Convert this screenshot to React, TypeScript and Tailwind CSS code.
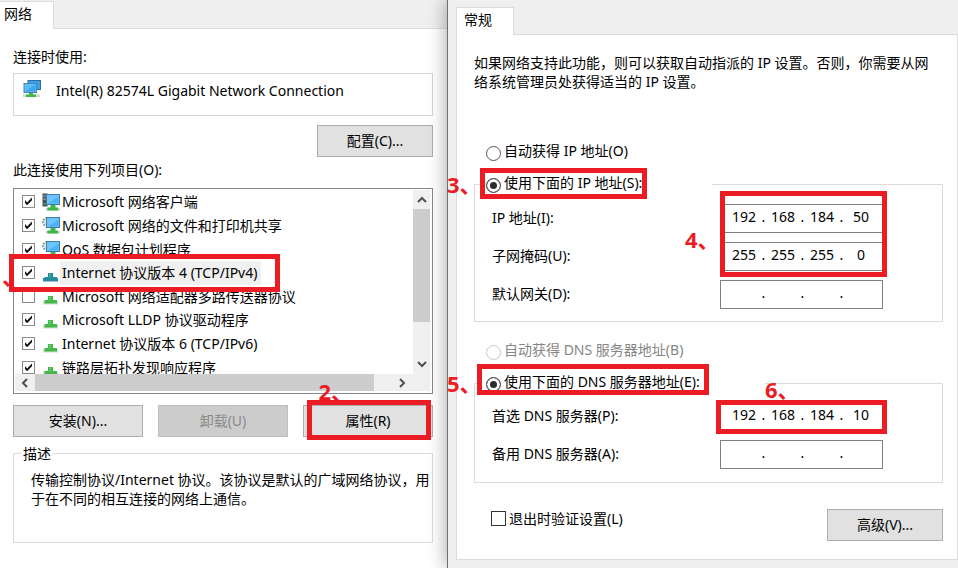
import React from "react";
import clsx from "clsx";

type IconKind = "client" | "service" | "protocol" | "selected";

interface ConnectionItem {
  id: string;
  name: string;
  icon: IconKind;
  checked: boolean;
}

const items: ConnectionItem[] = [
  { id: "client", name: "Microsoft 网络客户端", icon: "client", checked: true },
  { id: "share", name: "Microsoft 网络的文件和打印机共享", icon: "service", checked: true },
  { id: "qos", name: "QoS 数据包计划程序", icon: "service", checked: true },
  { id: "ipv4", name: "Internet 协议版本 4 (TCP/IPv4)", icon: "selected", checked: true },
  { id: "mux", name: "Microsoft 网络适配器多路传送器协议", icon: "protocol", checked: false },
  { id: "lldp", name: "Microsoft LLDP 协议驱动程序", icon: "protocol", checked: true },
  { id: "ipv6", name: "Internet 协议版本 6 (TCP/IPv6)", icon: "protocol", checked: true },
  { id: "topology", name: "链路层拓扑发现响应程序", icon: "protocol", checked: true },
];

const AdapterIcon = () => (
  <svg width="18" height="18" viewBox="0 0 18 18" aria-hidden="true">
    <rect x="5" y="0.5" width="12.5" height="9" fill="#3aa0ea" stroke="#2f6f9e" />
    <rect x="1" y="3.5" width="12.5" height="9" fill="#5cbcf8" stroke="#4d86ab" />
    <path d="M2 11.5 L12.5 4.5 V11.5Z" fill="#3fa6ee" />
    <path d="M0 14.5h17v2.5H0z" fill="#d2d5d2" />
    <path d="M6 13h4v1.5h3V17H3v-2.500h3z" fill="#3fb54a" />
  </svg>
);

const ItemIcon = ({ kind }: { kind: IconKind }) => {
  if (kind === "protocol" || kind === "selected") {
    const teal = kind === "selected";
    return (
      <svg width="18" height="18" viewBox="0 0 18 18" aria-hidden="true">
        <path d="M1 14h15v3.500H1z" fill={teal ? "#3c7fae" : "#d3dbd3"} />
        <path d="M6 9h5v4h4v3.500H2.500V13H6z" fill={teal ? "#1f8f9c" : "#45b649"} />
        <path d="M7 9.500h2v4H7z" fill={teal ? "#38a9a8" : "#66c968"} />
      </svg>
    );
  }
  return (
    <svg width="18" height="18" viewBox="0 0 18 18" aria-hidden="true">
      {kind === "client" ? (
        <g>
          <path d="M0.500 0.500h5v13h-5z" fill="#4a4f54" />
          <path d="M1 3h4M1 6h4" stroke="#a7adb2" />
          <path d="M1.500 10h2v1.500h-2z" fill="#3bc04a" />
        </g>
      ) : (
        <circle cx="5" cy="6" r="4" fill="#e8e8e8" stroke="#8f979d" strokeWidth="2" strokeDasharray="1.600 1.200" />
      )}
      <rect x="4.500" y="1.500" width="13" height="10" fill="#6cc6fb" stroke="#3b7ca8" />
      <path d="M6 10.500 L16.500 3.500 V10.500Z" fill="#4db2f4" />
      <path d="M4 15h14v2.500H4z" fill="#c9d3c9" />
      <path d="M8.500 12h5v2.500H16v3H5.500v-3h3z" fill="#3fb54a" />
    </svg>
  );
};

const CheckBox = ({ id, checked }: { id: string; checked: boolean }) => (
  <span className="relative block size-[13px]">
    <input
      id={id}
      type="checkbox"
      defaultChecked={checked}
      className="peer block size-[13px] appearance-none border border-[#8a8a8a] bg-white"
    />
    <svg
      viewBox="0 0 13 13"
      aria-hidden="true"
      className="pointer-events-none absolute inset-0 hidden size-[13px] peer-checked:block"
    >
      <path d="M3 5v3l2 2.200 5-5V2.500L5 7.500z" fill="#111" />
    </svg>
  </span>
);

interface RadioProps {
  id: string;
  name: string;
  label: string;
  checked?: boolean;
  disabled?: boolean;
}

const Radio: React.FC<RadioProps> = ({ id, name, label, checked, disabled }) => (
  <div className="flex h-5 items-center gap-[3px]">
    <input
      id={id}
      type="radio"
      name={name}
      defaultChecked={checked}
      disabled={disabled}
      className="mt-[3px] size-[15px] shrink-0 appearance-none rounded-full border border-[#555] bg-white checked:bg-[#2b2b2b] checked:shadow-[inset_0_0_0_3px_white] disabled:border-[#c8c8c8]"
    />
    <label htmlFor={id} className={clsx("pb-1 whitespace-nowrap", disabled && "text-[#858585]")}>
      {label}
    </label>
  </div>
);

// Red number with the enumeration comma, placed over the dialog
const Step = ({ children, className }: { children: string; className: string }) => (
  <span className={clsx("pointer-events-none absolute text-[22px] leading-6 font-bold whitespace-nowrap text-[#ec1c24]", className)}>
    {children}
  </span>
);

const Frame = ({ className }: { className: string }) => (
  <span className={clsx("pointer-events-none absolute border-5 border-[#ec1c24]", className)} />
);

const DialogButton = ({ children, className, disabled }: { children: string; className?: string; disabled?: boolean }) => (
  <button
    disabled={disabled}
    className={clsx(
      "h-8 border border-[#adadad] bg-[#e1e1e1] pb-0.5 disabled:border-[#bfbfbf] disabled:bg-[#cccccc] disabled:text-[#8a8a8a]",
      className
    )}
  >
    {children}
  </button>
);

const AddressRow = ({ label, octets }: { label: string; octets: string[] }) => (
  <div className="flex items-center">
    <span className="w-[228px] pb-0.5">{label}</span>
    <div role="group" aria-label={label} className="flex h-[29px] w-[163px] items-center border border-[#7f7f7f] bg-white pb-1 pl-[7px]">
      {octets.map((octet, i) => (
        <React.Fragment key={i}>
          {i > 0 && <span className="w-[7px] text-center">.</span>}
          <input aria-label={`${label} ${i + 1}`} defaultValue={octet} className="w-8 bg-transparent text-center outline-none" />
        </React.Fragment>
      ))}
    </div>
  </div>
);

const Chevron = ({ d }: { d: string }) => (
  <svg width="10" height="10" viewBox="0 0 10 10" aria-hidden="true">
    <path d={d} fill="none" stroke="#505050" strokeWidth="2" />
  </svg>
);

const ItemList = () => (
  <div className="relative border border-[#828790] bg-white p-px">
    <div className="flex h-[184px]">
      <div className="min-w-0 flex-1 overflow-hidden">
        <ul className="grid h-[189px] grid-rows-8">
          {items.map((item) => (
            <li key={item.id} className="flex items-center pl-[7px]">
              <CheckBox id={item.id} checked={item.checked} />
              <label htmlFor={item.id} className="flex h-full items-center pl-[7px] whitespace-nowrap">
                <ItemIcon kind={item.icon} />
                <span className={clsx("flex h-full items-center pr-1 pl-0.5", item.icon === "selected" && "bg-[#f0f0f0]")}>
                  {item.name}
                </span>
              </label>
            </li>
          ))}
        </ul>
      </div>
      <div className="mr-px flex w-[17px] flex-col items-center bg-[#f0f0f0]">
        <button aria-label="向上滚动" className="grid h-[19px] place-items-center">
          <Chevron d="M1 7l4-4 4 4" />
        </button>
        <div className="h-[113px] w-full bg-[#cdcdcd]" />
        <button aria-label="向下滚动" className="mt-auto grid h-5 place-items-center">
          <Chevron d="M1 3l4 4 4-4" />
        </button>
      </div>
    </div>
    <div className="mr-px mb-px flex h-[17px] items-center bg-[#f0f0f0]">
      <button aria-label="向左滚动" className="grid w-5 place-items-center">
        <Chevron d="M7 1L3 5l4 4" />
      </button>
      <div className="h-full w-[82%] bg-[#cdcdcd]" />
      <button aria-label="向右滚动" className="ml-auto grid w-14 place-items-center">
        <Chevron d="M3 1l4 4-4 4" />
      </button>
    </div>
    <Step className="top-[75px] -left-3">、</Step>
    <Frame className="top-[65px] -left-[5px] h-[38px] w-[271px]" />
  </div>
);

const NetworkDialog = () => (
  <section className="flex flex-col bg-[#efefef]">
    <div className="flex h-[29px] items-end border-b border-[#dcdcdc]">
      <h2 className="-mb-px h-7 w-[54px] border-t border-r border-[#dcdcdc] bg-white pt-0.5 pl-1">网络</h2>
    </div>
    <div className="flex-1 bg-white pr-[14px] pb-6 pl-[13px]">
      <p className="pt-[18px]">连接时使用:</p>
      <div className="mt-[7px] flex h-[43px] border border-[#d5d5d5] pt-1.5 pl-[9px]">
        <AdapterIcon />
        <span className="pt-px pl-[15px]">Intel(R) 82574L Gigabit Network Connection</span>
      </div>
      <div className="mt-[9px] flex justify-end">
        <DialogButton className="w-[116px]">配置(C)...</DialogButton>
      </div>
      <p className="mt-[3px] mb-[9px]">此连接使用下列项目(O):</p>
      <ItemList />
      <div className="relative mt-[11px] flex justify-between">
        <DialogButton className="w-[130px]">安装(N)...</DialogButton>
        <DialogButton className="w-[130px]" disabled>卸载(U)</DialogButton>
        <DialogButton className="w-[130px]">属性(R)</DialogButton>
        <Step className="-top-[26px] right-[80px]">2、</Step>
        <Frame className="-top-[5px] right-0.5 h-10 w-[124px]" />
      </div>
      <fieldset className="mt-[7px] min-h-[99px] border border-[#dcdcdc] pl-[17px]">
        <legend className="-ml-2.5 px-0.5">描述</legend>
        <p className="pt-[7px] whitespace-nowrap">
          传输控制协议/Internet 协议。该协议是默认的广域网络协议，用
          <br />
          于在不同的相互连接的网络上通信。
        </p>
      </fieldset>
    </div>
  </section>
);

const Ipv4Dialog = () => (
  <section className="relative border-l border-[#6e6e6e] bg-[#efefef] pt-[7px] pl-2 shadow-[-2px_0_16px_rgba(0,0,0,0.3)]">
    <h2 className="relative -mb-px h-7 w-[58px] border border-b-0 border-[#dcdcdc] bg-white pt-0.5 pl-[7px]">常规</h2>
    <div className="border border-[#dcdcdc] bg-white pr-[14px] pb-[18px] pl-[17px]">
      <p className="pt-[18px] whitespace-nowrap">
        如果网络支持此功能，则可以获取自动指派的 IP 设置。否则，你需要从网
        <br />
        络系统管理员处获得适当的 IP 设置。
      </p>
      <div className="mt-[51px] pl-3">
        <Radio id="ip-auto" name="ip" label="自动获得 IP 地址(O)" />
      </div>
      <fieldset className="mt-3 border border-[#dcdcdc]">
        <legend className="relative ml-[5px] w-[232px] pl-1.5">
          <Radio id="ip-manual" name="ip" label="使用下面的 IP 地址(S):" checked />
          <Frame className="-top-1.5 left-0 h-[31px] w-[167px]" />
          <Step className="-top-0.5 -left-[33px]">3、</Step>
        </legend>
        <div className="relative flex flex-col gap-[9px] pt-[10px] pb-3 pl-[17px]">
          <AddressRow label="IP 地址(I):" octets={["192", "168", "184", "50"]} />
          <AddressRow label="子网掩码(U):" octets={["255", "255", "255", "0"]} />
          <AddressRow label="默认网关(D):" octets={["", "", "", ""]} />
          <Frame className="-top-[3px] left-[245px] h-[86px] w-[167px]" />
          <Step className="top-[33px] left-[210px]">4、</Step>
        </div>
      </fieldset>
      <div className="mt-[19px] pl-3">
        <Radio id="dns-auto" name="dns" label="自动获得 DNS 服务器地址(B)" disabled />
      </div>
      <fieldset className="mt-3 border border-[#dcdcdc]">
        <legend className="relative ml-[5px] w-[285px] pl-1.5">
          <Radio id="dns-manual" name="dns" label="使用下面的 DNS 服务器地址(E):" checked />
          <Frame className="-top-[9px] -left-[3px] h-[31px] w-[232px]" />
          <Step className="-top-0.5 -left-[33px]">5、</Step>
        </legend>
        <div className="relative flex flex-col gap-[9px] pt-[9px] pb-[13px] pl-[17px]">
          <AddressRow label="首选 DNS 服务器(P):" octets={["192", "168", "184", "10"]} />
          <AddressRow label="备用 DNS 服务器(A):" octets={["", "", "", ""]} />
          <Step className="-top-4 left-[290px]">6、</Step>
          <Frame className="top-[7px] left-[241px] h-[34px] w-[171px]" />
        </div>
      </fieldset>
      <div className="mt-[26px] flex items-start justify-between pl-[17px]">
        <div className="flex h-[18px] items-center gap-[3px]">
          <input id="validate" type="checkbox" className="size-[15px] appearance-none border border-[#333] bg-white" />
          <label htmlFor="validate">退出时验证设置(L)</label>
        </div>
        <DialogButton className="w-[116px]">高级(V)...</DialogButton>
      </div>
    </div>
  </section>
);

const App: React.FC = () => {
  return (
    <main className="grid min-h-screen grid-cols-[447fr_511fr] overflow-hidden bg-[#efefef] font-['Noto_Sans','Noto_Sans_CJK_SC',sans-serif] text-[14px] leading-[19px] text-black">
      <NetworkDialog />
      <Ipv4Dialog />
    </main>
  );
};

export default App;
